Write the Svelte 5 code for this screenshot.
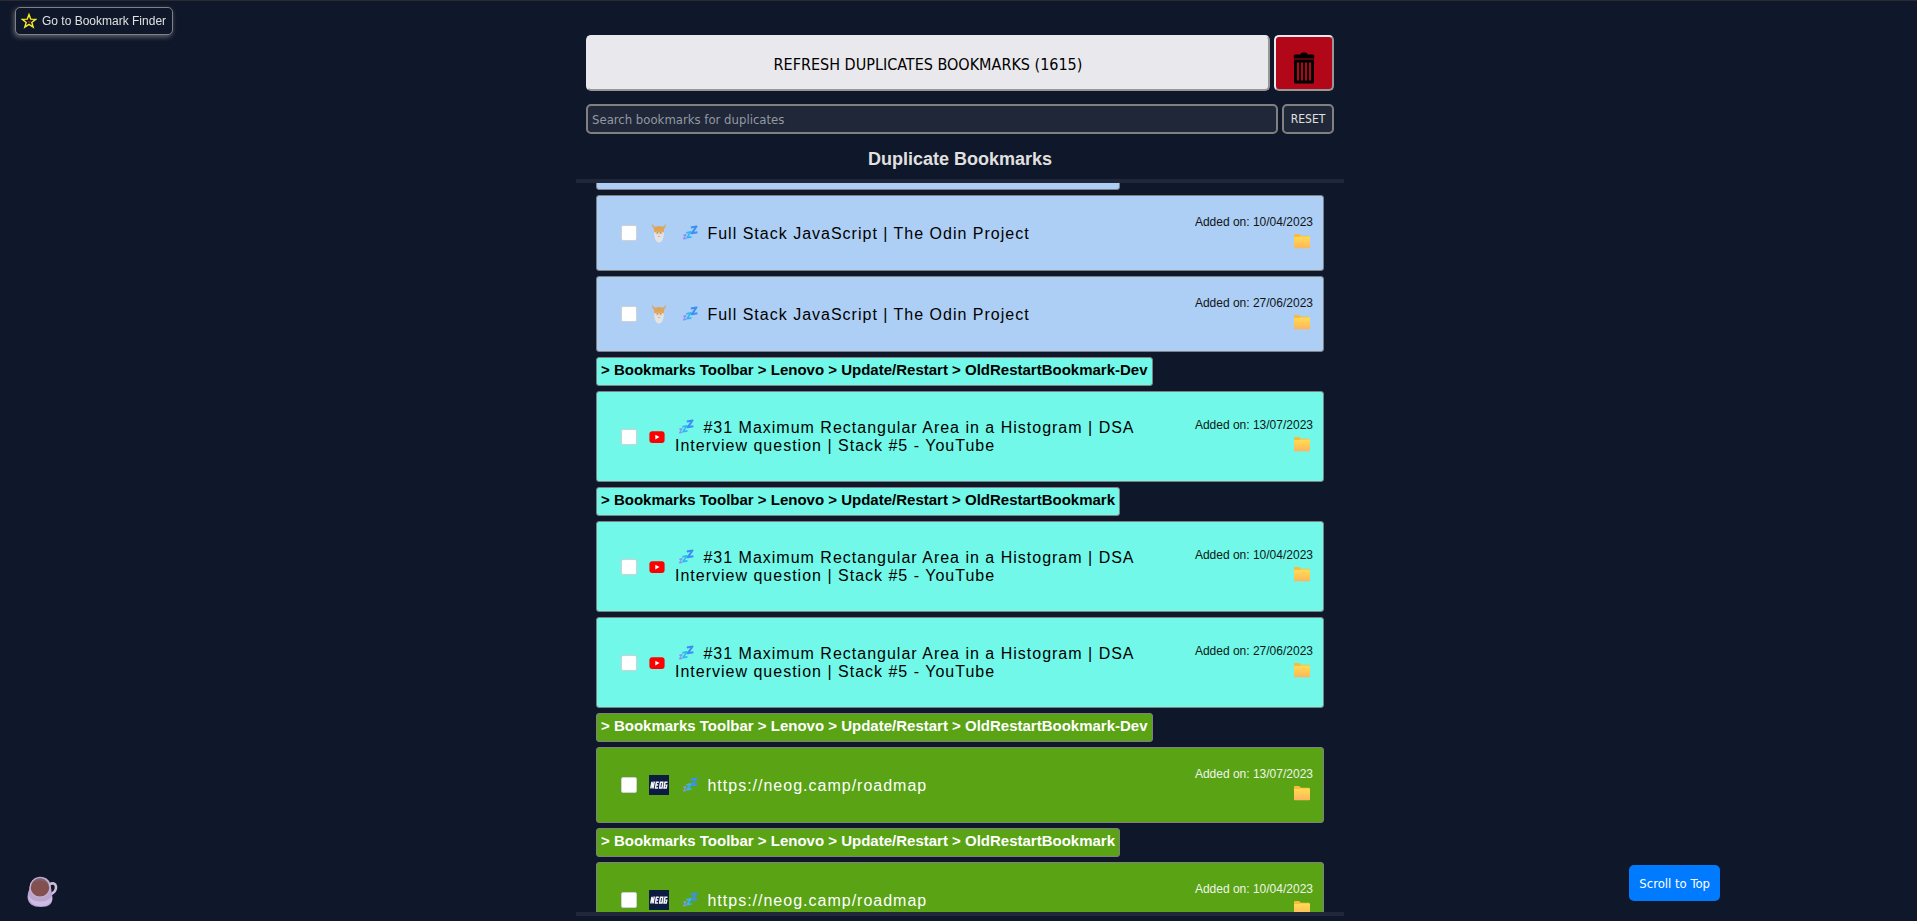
<script>
  import { onMount } from 'svelte';

  const ROOT = '> Bookmarks Toolbar > Lenovo > Update/Restart > ';
  const odin = 'Full Stack JavaScript | The Odin Project';
  const youtube = '#31 Maximum Rectangular Area in a Histogram | DSA Interview question | Stack #5 - YouTube';
  const neog = 'https://neog.camp/roadmap';

  const groups = [
    { tone: 'blue', icon: 'odin', folder: 'OldRestartBookmark', title: odin, dates: ['10/04/2023', '27/06/2023'] },
    { tone: 'aqua', icon: 'youtube', folder: 'OldRestartBookmark-Dev', title: youtube, dates: ['13/07/2023'] },
    { tone: 'aqua', icon: 'youtube', folder: 'OldRestartBookmark', title: youtube, dates: ['10/04/2023', '27/06/2023'] },
    { tone: 'green', icon: 'neog', folder: 'OldRestartBookmark-Dev', title: neog, dates: ['13/07/2023'] },
    { tone: 'green', icon: 'neog', folder: 'OldRestartBookmark', title: neog, dates: ['10/04/2023'] }
  ];

  let query = $state('');
  let list;

  onMount(() => {
    list.scrollTop = 22;
  });
</script>

{#snippet favicon(name)}
  {#if name === 'odin'}
    <svg class="favicon" viewBox="0 0 20 20" aria-hidden="true">
      <path d="M5 9h10l-.8 5.5Q13 19.500 10 19.500T5.800 14.500z" fill="#e6e4e2" />
      <path d="M6.500 7h7v4.500h-7z" fill="#edc9a6" />
      <path d="M5.500 10.500Q8 13 10 11.500Q12 13 14.500 10.500L14 15Q12.500 19 10 19Q7.500 19 6 15z" fill="#e4e4e6" />
      <path d="M3 .8Q2.800 4 5 6L5.400 9.500L8.500 8.500L10 9.500L11.500 8.500L14.600 9.500L15 6Q17.200 4 17 .8Q15.800 3.500 13.300 3.700Q10 2.500 6.700 3.700Q4.200 3.500 3 .8z" fill="#dda558" />
      <path d="M3 .8Q2.800 3.500 4.700 5.200L5.800 3.600Q4 3 3 .8zM17 .8Q17.200 3.500 15.300 5.200L14.200 3.600Q16 3 17 .8z" fill="#cfae80" />
      <path d="M7.700 9.800h1.300M11 9.800h1.300" stroke="#8f7a68" stroke-width="1" />
      <path d="M8.700 13.500h2.600" stroke="#c5aaa0" stroke-width=".8" />
    </svg>
  {:else if name === 'youtube'}
    <svg class="favicon small" viewBox="0 0 16 16" aria-hidden="true">
      <rect x=".4" y="2.300" width="15.200" height="11.600" rx="3" fill="#f00" />
      <path d="M6.300 5.700v4.700L10.500 8z" fill="#fff" />
    </svg>
  {:else}
    <svg class="favicon" viewBox="0 0 20 20" aria-hidden="true">
      <rect width="20" height="20" fill="#0b1c40" />
      <g fill="none" stroke="#f4f4f8" stroke-width="1.500">
        <path d="M1.800 13.500L3 6.800L4 13.300L5.300 6.500" />
        <path d="M9.800 7.200H7.400L6.500 13H9M7 10H9.200" />
        <path d="M11.500 7.200H13.800L13 13H10.600z" />
        <path d="M18.500 7.200H16L15 13H17.200L17.700 10.200H16.500" />
      </g>
    </svg>
  {/if}
{/snippet}

<div class="page">
  <button class="finder" type="button">
    <svg viewBox="0 0 16 16" aria-hidden="true">
      <path d="M8 1.500L9.700 6.100L14.700 6.300L10.800 9.400L12.200 14.200L8 11.400L3.800 14.200L5.200 9.400L1.300 6.300L6.300 6.100z" fill="#15151f" stroke="#f4f127" stroke-width="1.400" />
      <path d="M6.300 7.500l2 1.100L10 7.500L9 9.500H7.500z" fill="#d32626" />
    </svg>
    Go to Bookmark Finder
  </button>

  <main>
    <header>
      <div class="row">
        <button class="refresh" type="button">REFRESH DUPLICATES BOOKMARKS (1615)</button>
        <button class="trash" type="button" aria-label="Delete selected bookmarks">
          <svg viewBox="0 0 22 32" aria-hidden="true">
            <path d="M7.500 2.500Q7.500 .5 9.500 .5h3Q14.500 .5 14.500 2.500H20Q21.200 2.500 21.200 4V6.500H.8V4Q.8 2.500 2 2.500z" />
            <path fill-rule="evenodd" d="M1 7.500H21V30Q21 31.500 19.500 31.500H2.500Q1 31.500 1 30zM4 10.500V28.500H6V10.500zM8 10.500V28.500H10V10.500zM12 10.500V28.500H14V10.500zM16 10.500V28.500H18V10.500z" />
          </svg>
        </button>
      </div>
      <div class="row">
        <input class="search" type="text" aria-label="Search bookmarks for duplicates" placeholder="Search bookmarks for duplicates" bind:value={query} />
        <button class="reset" type="button" onclick={() => (query = '')}>RESET</button>
      </div>
    </header>

    <h1>Duplicate Bookmarks</h1>

    <div class="list" bind:this={list}>
      {#each groups as group}
        <div class="crumb {group.tone}">{ROOT}{group.folder}</div>
        {#each group.dates as date}
          <label class="card {group.tone}">
            <input type="checkbox" />
            {@render favicon(group.icon)}
            <span class="title">
              <svg class="zzz" viewBox="0 0 16 16" aria-hidden="true">
                <g fill="none" stroke-linejoin="round">
                  <path d="M1.300 10.300L4 9.700L1.600 13.800L4.300 13.400" stroke="#8d8ef2" stroke-width="1.200" />
                  <path d="M4.300 7.800L8.800 6.900L5 12.600L9.500 11.900" stroke="#35b5f5" stroke-width="1.700" />
                  <path d="M8.800 2.500L14.500 1.500L9.700 8.300L15.400 7.300" stroke="#3b8ff5" stroke-width="2" />
                </g>
              </svg>
              {group.title}
            </span>
            <span class="meta">
              <span class="date">Added on: {date}</span>
              <svg class="folder" viewBox="0 0 16 16" aria-hidden="true">
                <defs>
                  <linearGradient id="folder-face" x1="0" y1="0" x2="0" y2="1">
                    <stop offset="0" stop-color="#ffdd52" />
                    <stop offset="1" stop-color="#ffb45c" />
                  </linearGradient>
                </defs>
                <path d="M0 2Q0 1 1 1H5L7 2.700H15.500V7H0z" fill="#fdb93c" />
                <path d="M0 4H5.500L7 3.400H15.300Q16 3.400 16 4V14.500Q16 15.300 15.200 15.300H.8Q0 15.300 0 14.500z" fill="url(#folder-face)" />
              </svg>
            </span>
          </label>
        {/each}
      {/each}
    </div>
  </main>

  <a class="coffee" href="#coffee" aria-label="Buy me a coffee">
    <svg viewBox="0 0 32 32" aria-hidden="true">
      <path d="M23 8.500Q29 5.500 30 10.500Q30.500 15.500 24.500 18.500" fill="none" stroke="#cbbcda" stroke-width="2.600" />
      <path d="M4.500 7Q8 .8 14 .8Q22 .8 24.500 8L26.500 22Q26.500 31 15 31Q2 31 1.500 21Q1.500 17 3 14z" fill="#b9a6cf" />
      <path d="M2.500 19Q5 25 14 25.500Q23 25.500 26 20L26 24Q23 30 14.500 30Q3.500 30 2.500 19z" fill="#cdbce4" />
      <ellipse cx="14" cy="11.500" rx="10.500" ry="10" fill="#ccb8d4" />
      <ellipse cx="14" cy="11.800" rx="9.300" ry="8.800" fill="#84504f" />
      <path d="M5 9Q8 2 14 2Q20 2 23 9Q19 4.500 14 4.500Q8 4.500 5 9z" fill="#7d6270" />
    </svg>
  </a>

  <button class="to-top" type="button" onclick={() => list.scrollTo({ top: 0 })}>Scroll to Top</button>
</div>

<style>
  :global(body) {
    margin: 0;
    background: #0f172a;
  }

  .page {
    box-sizing: border-box;
    display: flex;
    justify-content: center;
    height: 100vh;
    padding: 34px 0 5px 3px;
    border-top: 1px solid #2b2a33;
    color: #e0e0e0;
    font-family: "Liberation Sans", Arial, sans-serif;
    background: #0f172a;
  }

  button,
  input {
    box-sizing: border-box;
    margin: 0;
    font-family: "DejaVu Sans Condensed", "DejaVu Sans", Tahoma, sans-serif;
  }

  button {
    cursor: pointer;
  }

  main {
    display: flex;
    flex-direction: column;
    width: 100%;
    max-width: 768px;
    min-height: 0;
  }

  header {
    display: grid;
    gap: 13px;
    padding: 0 10px;
  }

  .row {
    display: flex;
    gap: 4px;
  }

  .refresh,
  .trash {
    height: 56px;
    border: 2px solid;
    border-color: #e9e9ed #979797 #979797 #e9e9ed;
    border-radius: 5px;
  }

  .refresh {
    flex: 1;
    padding: 2px 8px 0;
    color: #000;
    font-size: 16px;
    background: #e9e9ed;
  }

  .trash {
    display: grid;
    place-items: center;
    width: 60px;
    padding: 10px 0 0;
    background: #b10718;
  }

  .trash svg {
    width: 22px;
    height: 32px;
  }

  .search,
  .reset {
    height: 30px;
    border: 2px solid #808080;
    border-radius: 5px;
    color: #e0e0e0;
    font-size: 13px;
    background: #1f2739;
  }

  .search {
    flex: 1;
    min-width: 0;
    padding: 0 4px;
  }

  .search::placeholder {
    color: #9499a1;
  }

  .reset {
    width: 52px;
    padding: 0;
    font-size: 12px;
  }

  h1 {
    margin: 0;
    padding: 15px 0 10px;
    font-size: 18px;
    line-height: 20px;
    text-align: center;
  }

  .list {
    display: flex;
    flex: 1;
    flex-direction: column;
    align-items: flex-start;
    gap: 5px;
    min-height: 0;
    padding: 0 20px 16px;
    border: solid #1f2739;
    border-width: 4px 0;
    overflow-y: auto;
    scrollbar-width: none;
  }

  .crumb,
  .card {
    box-sizing: border-box;
    flex: none;
    border: 1px solid #808080;
    border-radius: 3px;
  }

  .crumb {
    padding: 4px 4px 7px;
    font-size: 15px;
    font-weight: bold;
    line-height: 16px;
  }

  .card {
    display: flex;
    align-items: center;
    width: 100%;
    padding: 27px 10px 27px 24px;
  }

  .blue {
    color: #000;
    background: #adcff5;
  }

  .aqua {
    color: #000;
    background: #71f8e9;
  }

  .green {
    color: #fff;
    background: #59a315;
  }

  .card input {
    flex: none;
    width: 16px;
    height: 16px;
    margin-right: 12px;
    border: 1px solid #d0d0d7;
    border-radius: 2px;
    background: #fff;
    appearance: none;
  }

  .card input:checked {
    background: #0060df;
  }

  .favicon {
    flex: none;
    width: 20px;
    height: 20px;
    margin-right: 10px;
  }

  .favicon.small {
    width: 16px;
    height: 16px;
  }

  .title {
    flex: 1;
    max-width: 480px;
    margin-bottom: -1px;
    font-size: 16px;
    letter-spacing: 1px;
    line-height: 18px;
  }

  .zzz {
    width: 16px;
    height: 16px;
    margin: 0 4px 0 3px;
    vertical-align: -2px;
  }

  .meta {
    display: flex;
    flex-direction: column;
    align-items: flex-end;
    gap: 3px;
    margin: -10px 0 -8px auto;
    padding-bottom: 2px;
    font-size: 12px;
    line-height: 16px;
    white-space: nowrap;
  }

  .date {
    opacity: .9;
  }

  .folder {
    width: 16px;
    height: 16px;
    margin-right: 3px;
  }

  .finder {
    position: fixed;
    top: 7px;
    left: 15px;
    display: flex;
    align-items: center;
    gap: 5px;
    height: 28px;
    padding: 0 6px 0 5px;
    border: 1px solid #808080;
    border-radius: 5px;
    color: #e0e0e0;
    font-family: "Liberation Sans", Arial, sans-serif;
    font-size: 12px;
    background: #0f172a;
    box-shadow: -1px 2px 5px #606570;
  }

  .finder svg {
    width: 16px;
    height: 16px;
  }

  .coffee {
    position: fixed;
    bottom: 13px;
    left: 26px;
    width: 32px;
    height: 32px;
  }

  .to-top {
    position: fixed;
    right: 197px;
    bottom: 20px;
    height: 36px;
    padding: 0 10px;
    border: 0;
    border-radius: 5px;
    color: #fff;
    font-size: 13px;
    background: #007bff;
  }
</style>
